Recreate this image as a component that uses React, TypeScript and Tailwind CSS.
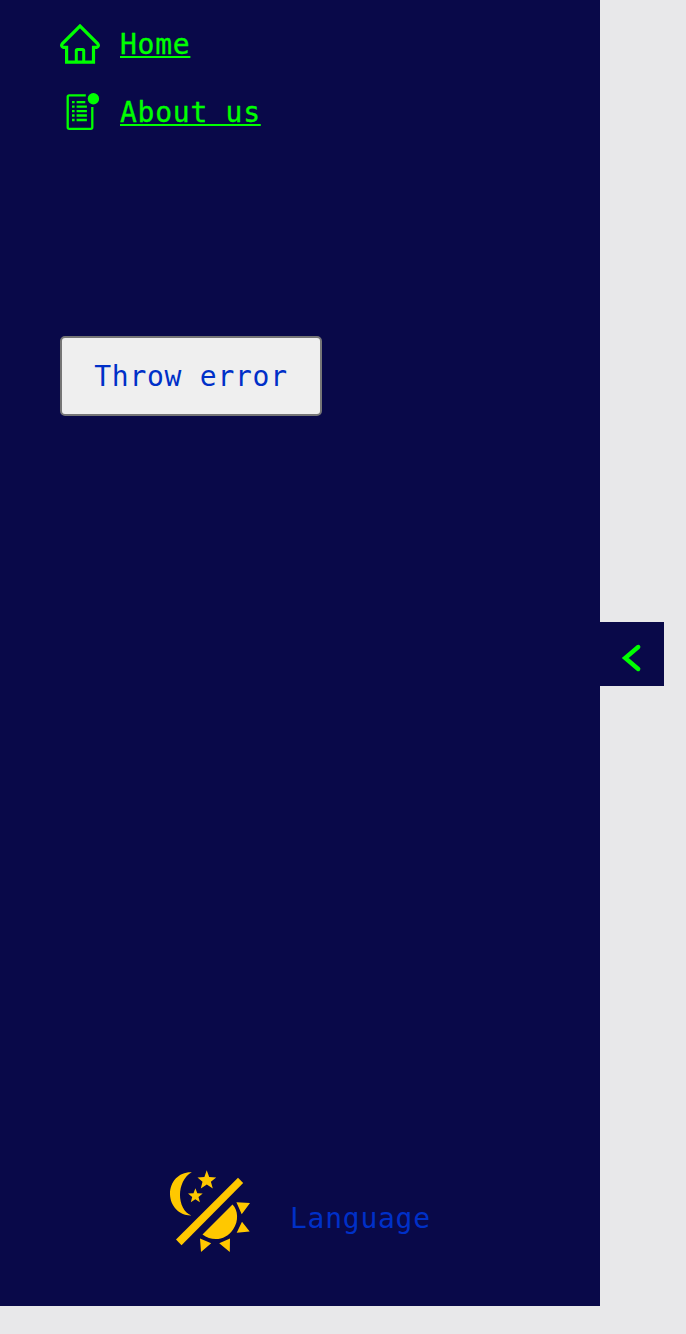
import React from "react";

function HomeIcon() {
  return (
    <svg className="size-10 shrink-0" viewBox="0 0 40 40" fill="none" stroke="#00ff00" strokeWidth="3.2" strokeLinejoin="round">
      <path d="M6.6 38.2V23.3H3.3Q.6 22.2 2.2 19.8L20 2L37.8 19.8Q39.4 22.2 36.7 23.3H33.5V38.2Z" strokeLinejoin="miter" />
      <path d="M16.3 38V26.5Q16.3 25.5 17.5 25.5H22.5Q23.7 25.5 23.7 26.5V38" strokeWidth="3" />
    </svg>
  );
}

function AboutIcon() {
  return (
    <svg className="size-10 shrink-0" viewBox="0 0 40 40" fill="none" stroke="#00ff00" strokeWidth="2.3">
      <path d="M25.8 3.3H9.2Q7.7 3.3 7.7 4.8V35.3Q7.7 36.8 9.2 36.8H30.8Q32.3 36.8 32.3 35.3V15" />
      <path d="M12 10.2h2.6M12 14.7h2.6M12 19.1h2.6M12 23.5h2.6M12 28h2.6M16.6 10.2h8.7M16.6 14.7h10.3M16.6 19.1h10.3M16.6 23.5h10.3M16.6 28h10.3" />
      <circle cx="33.4" cy="6.7" r="5.7" fill="#00ff00" stroke="none" />
    </svg>
  );
}

function ThemeIcon() {
  return (
    <svg className="h-[84px] w-20 shrink-0" viewBox="0 0 80 84" fill="#ffc800">
      <path d="M21.8 3.2C9 2.6 0 12.5 0 24.8C0 37 9.5 47 21.3 46.5C6.4 40 6 12 21.8 3.2Z" />
      <path d="M36.7 1.3L39.2 7.9L46.2 8.4L40.9 12.8L42.8 19.4L36.8 15.6L30.8 19.4L32.5 12.7L27.5 8.4L34.4 7.9Z" />
      <path d="M25.4 19.3L27.3 24.2L32.7 24.6L28.5 27.9L29.9 33.2L25.3 30.2L20.8 33.2L22.2 27.9L18 24.6L23.5 24.2Z" />
      <path d="M68 8.8L73.2 14.1L11.5 76.3L6 70.5Z" />
      <path d="M62.5 35.5C68 41 69 52 63.2 60.3C56.5 71 42.5 73.3 32.5 65.5Z" />
      <path d="M66.4 33.2L80 34L71.7 45.2ZM72 52.8L79.7 62.5L66.7 63.8ZM60 69.6L59.8 83L49.2 74.2ZM30 69.6L41.2 74.2L31 83Z" />
    </svg>
  );
}

function NavLink({ icon, label }: { icon: React.ReactNode; label: string }) {
  return (
    <a href="#" className="flex h-10 items-center gap-5 text-[#00ff00]">
      {icon}
      <span className="pt-0.5 underline decoration-2 underline-offset-2 [-webkit-text-stroke:0.3px_#00ff00]">{label}</span>
    </a>
  );
}

export default function App() {
  return (
    <div className="flex h-[1334px] w-full items-start overflow-hidden bg-[#e8e8ea] font-['DejaVu_Sans_Mono',monospace] text-[28px] leading-10 tracking-[0.74px]">
      <aside className="flex h-[1306px] w-[600px] shrink-0 flex-col bg-[#090949] px-[60px] pt-6">
        <nav className="flex flex-col gap-7">
          <NavLink icon={<HomeIcon />} label="Home" />
          <NavLink icon={<AboutIcon />} label="About us" />
        </nav>
        <button className="mt-[204px] h-20 w-[262px] rounded-[5px] border-2 border-[#767676] bg-[#efefef] pt-0.5 text-[#0030c8]">
          Throw error
        </button>
        <div className="mt-auto mb-[53px] flex items-center gap-10 pl-[110px]">
          <ThemeIcon />
          <button className="pt-4 text-[#0030c8]">Language</button>
        </div>
      </aside>
      <button className="mt-[622px] flex size-16 shrink-0 items-center justify-center bg-[#090949]" aria-label="Collapse sidebar">
        <svg className="size-16" viewBox="0 0 64 64" fill="none" stroke="#00ff00" strokeWidth="4.4" strokeLinecap="round">
          <path d="M38.2 25L25.2 36L38.2 47" />
        </svg>
      </button>
    </div>
  );
}
